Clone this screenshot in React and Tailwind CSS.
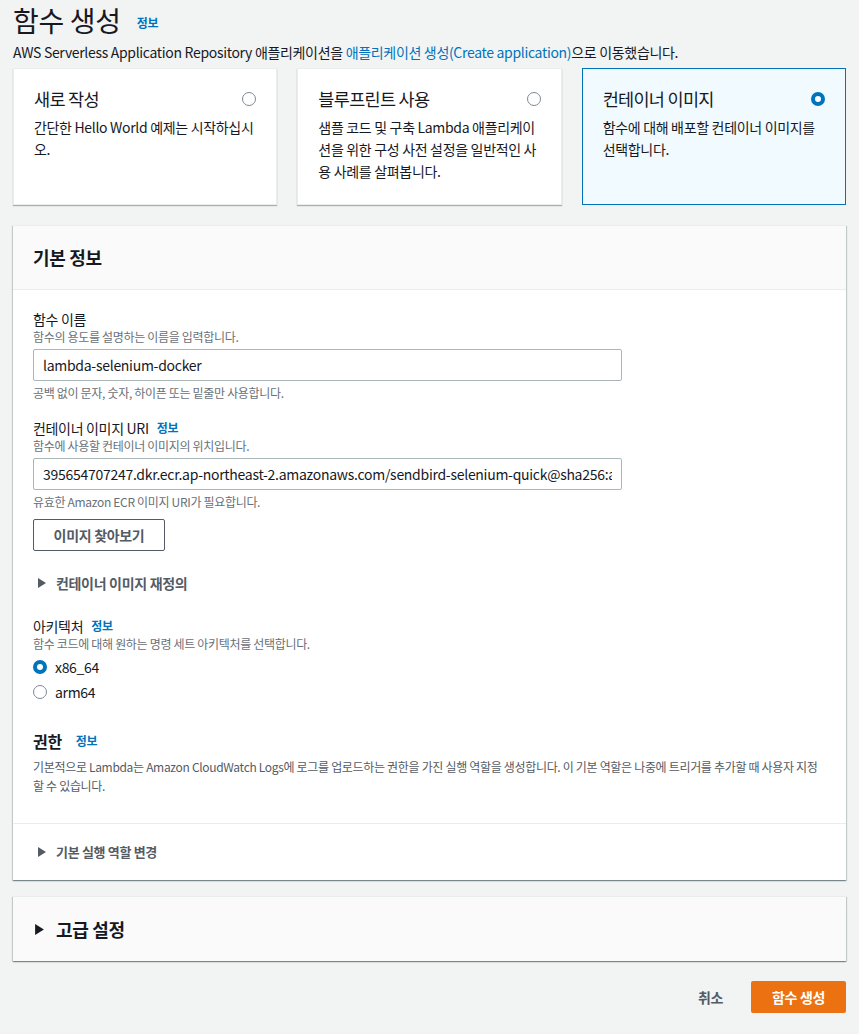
import React, { useState } from 'react';

const font = { fontFamily: '"Noto Sans CJK KR", "Noto Sans", sans-serif' };

const Info = () => (
  <span className="ml-2 text-[12px] font-bold text-[#0073bb]">정보</span>
);

const Radio = ({ checked }) =>
  checked ? (
    <span className="w-[14px] h-[14px] shrink-0 rounded-full bg-[#0073bb] flex items-center justify-center">
      <span className="block w-[6px] h-[6px] rounded-full bg-white" />
    </span>
  ) : (
    <span className="block w-[14px] h-[14px] shrink-0 rounded-full border-[1.5px] border-[#7d8998] bg-white" />
  );

const Caret = ({ size = 'sm' }) => (
  <svg
    className={size === 'lg' ? 'w-[9px] h-[11px]' : 'w-[8px] h-[10px]'}
    viewBox="0 0 8 10"
  >
    <path d="M0 0 L8 5 L0 10 Z" fill="currentColor" />
  </svg>
);

const OptionCard = ({ title, desc, selected }) => (
  <div
    className={`flex-1 h-[137px] px-5 pt-[18px] ${
      selected
        ? 'bg-[#f1faff] border border-[#0073bb]'
        : 'bg-white border border-[#eaeded] shadow-[0_1px_1px_0_rgba(0,28,36,0.3)]'
    }`}
  >
    <div className="flex items-center justify-between">
      <div className="text-[17.5px] leading-[24px] tracking-[-0.04em] text-[#16191f]">{title}</div>
      <Radio checked={selected} />
    </div>
    <div className="mt-[5px] text-[14px] leading-[22px] text-[#16191f]">{desc}</div>
  </div>
);

const Field = ({ label, info, desc, children, constraint }) => (
  <div>
    <div className="text-[14px] leading-[20px] text-[#16191f] flex items-center">
      {label}
      {info && <Info />}
    </div>
    {desc && <div className="text-[12px] leading-[16px] text-[#687078]">{desc}</div>}
    <div className="mt-[4px]">{children}</div>
    {constraint && (
      <div className="mt-[4px] text-[12px] leading-[16px] text-[#687078]">{constraint}</div>
    )}
  </div>
);

const panelShadow =
  'shadow-[0_1px_1px_0_rgba(0,28,36,0.3),1px_1px_1px_0_rgba(0,28,36,0.15),-1px_1px_1px_0_rgba(0,28,36,0.15)]';

export default function App() {
  const [arch, setArch] = useState('x86_64');

  return (
    <div
      className="min-h-[1034px] bg-[#f2f3f3] px-[13px] pb-8 text-[#16191f] tracking-[-0.02em]"
      style={font}
    >
      <div className="flex items-end pt-[2px]">
        <h1 className="text-[28px] leading-[36px] font-normal">함수 생성</h1>
        <span className="ml-[16px] mb-[6px] text-[12px] font-bold text-[#0073bb]">정보</span>
      </div>
      <p className="mt-[4px] text-[14px] leading-[20px]">
        AWS Serverless Application Repository 애플리케이션을{' '}
        <span className="text-[#0073bb]">애플리케이션 생성(Create application)</span>으로 이동했습니다.
      </p>

      <div className="mt-[6px] flex gap-5">
        <OptionCard title="새로 작성" desc="간단한 Hello World 예제는 시작하십시오." />
        <OptionCard
          title="블루프린트 사용"
          desc="샘플 코드 및 구축 Lambda 애플리케이션을 위한 구성 사전 설정을 일반적인 사용 사례를 살펴봅니다."
        />
        <OptionCard
          title="컨테이너 이미지"
          desc="함수에 대해 배포할 컨테이너 이미지를 선택합니다."
          selected
        />
      </div>

      <div className={`mt-[20px] bg-white border-t border-[#eaeded] ${panelShadow}`}>
        <div className="bg-[#fafafa] border-b border-[#eaeded] h-[64px] px-5 flex items-center">
          <h2 className="text-[18px] font-bold">기본 정보</h2>
        </div>

        <div className="px-5 pt-[19px] pb-[28px] flex flex-col">
          <Field
            label="함수 이름"
            desc="함수의 용도를 설명하는 이름을 입력합니다."
            constraint="공백 없이 문자, 숫자, 하이픈 또는 밑줄만 사용합니다."
          >
            <input
              readOnly
              value="lambda-selenium-docker"
              className="w-[589px] h-[32px] px-[9px] border border-[#aab7b8] rounded-[2px] text-[14px] text-[#16191f] outline-none bg-white tracking-[-0.02em]"
              style={font}
            />
          </Field>

          <div className="mt-[17px]">
            <Field
              label="컨테이너 이미지 URI"
              info
              desc="함수에 사용할 컨테이너 이미지의 위치입니다."
              constraint="유효한 Amazon ECR 이미지 URI가 필요합니다."
            >
              <input
                readOnly
                value="395654707247.dkr.ecr.ap-northeast-2.amazonaws.com/sendbird-selenium-quick@sha256:a1b2c3"
                className="w-[589px] h-[32px] px-[9px] border border-[#aab7b8] rounded-[2px] text-[14px] text-[#16191f] outline-none bg-white tracking-[-0.02em]"
                style={font}
              />
            </Field>
          </div>

          <button className="mt-[9px] self-start w-[132px] h-[32px] border border-[#545b64] rounded-[2px] bg-white text-[14px] font-bold text-[#545b64]">
            이미지 찾아보기
          </button>

          <div className="mt-[22px] flex items-center gap-[10px] pl-[5px] text-[14px] leading-[20px] font-bold text-[#545b64]">
            <Caret />
            컨테이너 이미지 재정의
          </div>

          <div className="mt-[23px]">
            <Field label="아키텍처" info desc="함수 코드에 대해 원하는 명령 세트 아키텍처를 선택합니다.">
              <div className="flex flex-col gap-[5px] pt-[1px]">
                {['x86_64', 'arm64'].map((a) => (
                  <label
                    key={a}
                    onClick={() => setArch(a)}
                    className="flex items-center gap-[8px] text-[14px] leading-[20px] cursor-pointer"
                  >
                    <Radio checked={arch === a} />
                    {a}
                  </label>
                ))}
              </div>
            </Field>
          </div>

          <div className="mt-[28px]">
            <div className="flex items-center">
              <span className="text-[16px] leading-[22px] font-bold">권한</span>
              <span className="ml-[14px] text-[12px] font-bold text-[#0073bb]">정보</span>
            </div>
            <p className="mt-[5px] text-[12px] leading-[19px] text-[#545b64]">
              기본적으로 Lambda는 Amazon CloudWatch Logs에 로그를 업로드하는 권한을 가진 실행 역할을 생성합니다. 이 기본 역할은 나중에 트리거를 추가할 때 사용자 지정할 수 있습니다.
            </p>
          </div>
        </div>

        <div className="border-t border-[#eaeded] h-[57px] pr-5 flex items-center gap-[10px] pl-[25px] text-[13px] font-bold text-[#545b64]">
          <Caret />
          기본 실행 역할 변경
        </div>
      </div>

      <div className={`mt-[16px] bg-[#fafafa] border-t border-[#eaeded] h-[65px] pr-5 flex items-center gap-[12px] pl-[22px] ${panelShadow}`}>
        <Caret size="lg" />
        <h2 className="text-[18px] font-bold">고급 설정</h2>
      </div>

      <div className="mt-[20px] flex justify-end items-center gap-[14px]">
        <button className="px-[14px] h-[32px] text-[14px] font-bold text-[#545b64]">취소</button>
        <button className="w-[95px] h-[32px] bg-[#ec7211] rounded-[2px] text-[14px] font-bold text-white">
          함수 생성
        </button>
      </div>
    </div>
  );
}
